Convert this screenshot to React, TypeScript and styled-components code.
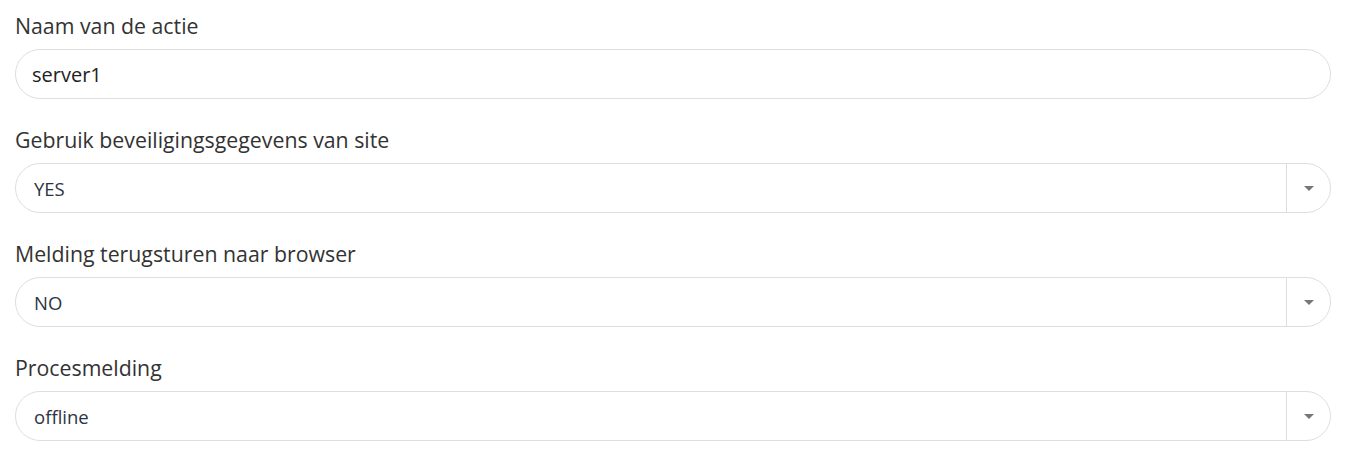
import React from "react";
import styled, { createGlobalStyle } from "styled-components";

const Global = createGlobalStyle`
  html, body { margin: 0; padding: 0; background: #fff; }
  body { font-family: "Open Sans", "Noto Sans", sans-serif; }
`;

const Form = styled.div`
  padding: 14px 14px 0 15px;
  display: flex;
  flex-direction: column;
  gap: 29px;
`;

const Field = styled.div`
  display: flex;
  flex-direction: column;
  gap: 11px;
`;

const Label = styled.label`
  font-size: 21.3px;
  line-height: 24px;
  color: #333;
  height: 24px;
`;

const Input = styled.input`
  box-sizing: border-box;
  height: 50px;
  width: 100%;
  border: 1px solid #dedede;
  border-radius: 25px;
  padding: 0 16px;
  font-family: inherit;
  font-size: 20px;
  color: #222;
  outline: none;
  background: #fff;
`;

const SelectBox = styled.div`
  box-sizing: border-box;
  height: 50px;
  display: flex;
  align-items: stretch;
  border: 1px solid #dedede;
  border-radius: 25px;
  background: #fff;
`;

const Value = styled.div`
  flex: 1;
  display: flex;
  align-items: center;
  padding-left: 18px;
  font-size: 18.5px;
  color: #2c3444;
`;

const Toggle = styled.div`
  width: 43px;
  border-left: 1px solid #dedede;
  display: flex;
  align-items: center;
  justify-content: center;
`;

const Arrow = styled.div`
  width: 0;
  height: 0;
  margin-left: 1px;
  border-left: 5px solid transparent;
  border-right: 5px solid transparent;
  border-top: 5px solid #777;
`;

const Select = ({ value }: { value: string }) => (
  <SelectBox>
    <Value>{value}</Value>
    <Toggle>
      <Arrow />
    </Toggle>
  </SelectBox>
);

export default function App() {
  return (
    <>
      <Global />
      <Form>
        <Field>
          <Label>Naam van de actie</Label>
          <Input defaultValue="server1" />
        </Field>
        <Field>
          <Label>Gebruik beveiligingsgegevens van site</Label>
          <Select value="YES" />
        </Field>
        <Field>
          <Label>Melding terugsturen naar browser</Label>
          <Select value="NO" />
        </Field>
        <Field>
          <Label>Procesmelding</Label>
          <Select value="offline" />
        </Field>
      </Form>
    </>
  );
}
